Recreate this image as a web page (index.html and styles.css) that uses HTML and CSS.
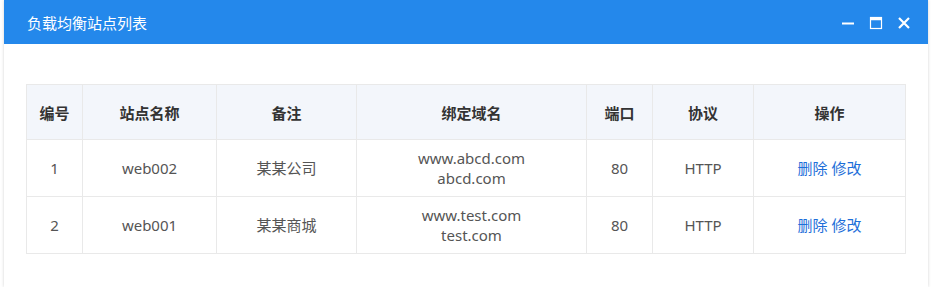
FILE: index.html
```html
<!DOCTYPE html>
<html lang="zh-CN">
<head>
    <meta charset="UTF-8">
    <meta name="viewport" content="width=device-width, initial-scale=1.0">
    <title>负载均衡站点列表</title>
    <link rel="stylesheet" href="styles.css">
</head>
<body>
    <div class="dialog">
        <div class="dialog-header">
            <span class="dialog-title">负载均衡站点列表</span>
            <div class="dialog-tools">
                <svg width="14" height="14" viewBox="0 0 14 14"><path d="M1 7.5h12" stroke="#fff" stroke-width="2"/></svg>
                <svg width="14" height="14" viewBox="0 0 14 14"><rect x="1.5" y="1.5" width="11" height="11" fill="none" stroke="#fff" stroke-width="1.2"/><path d="M1 3h12" stroke="#fff" stroke-width="2.5"/></svg>
                <svg width="14" height="14" viewBox="0 0 14 14"><path d="M2 2l10 10M12 2L2 12" stroke="#fff" stroke-width="2.2"/></svg>
            </div>
        </div>
        <div class="dialog-body">
            <table class="site-table">
                <thead>
                    <tr>
                        <th class="c-id">编号</th>
                        <th class="c-name">站点名称</th>
                        <th class="c-note">备注</th>
                        <th class="c-domain">绑定域名</th>
                        <th class="c-port">端口</th>
                        <th class="c-proto">协议</th>
                        <th>操作</th>
                    </tr>
                </thead>
                <tbody>
                    <tr>
                        <td>1</td>
                        <td>web002</td>
                        <td>某某公司</td>
                        <td>www.abcd.com<br>abcd.com</td>
                        <td>80</td>
                        <td>HTTP</td>
                        <td><a href="#">删除</a> <a href="#">修改</a></td>
                    </tr>
                    <tr>
                        <td>2</td>
                        <td>web001</td>
                        <td>某某商城</td>
                        <td>www.test.com<br>test.com</td>
                        <td>80</td>
                        <td>HTTP</td>
                        <td><a href="#">删除</a> <a href="#">修改</a></td>
                    </tr>
                </tbody>
            </table>
        </div>
    </div>
</body>
</html>
```

FILE: styles.css
```css
body {
    margin: 0;
    padding: 0 7px 0 4px;
    font-family: "Noto Sans", "Noto Sans CJK SC", sans-serif;
    background: #fff;
}
.dialog {
    background: #fff;
    height: 287px;
    box-shadow: 0 0 3px rgba(0,0,0,0.18);
}
.dialog-header {
    display: flex;
    align-items: center;
    justify-content: space-between;
    height: 44px;
    padding: 0 17px 0 23px;
    background-color: #2488eb;
    color: #fff;
}
.dialog-title {
    font-size: 15px;
    font-family: "Noto Sans CJK SC", sans-serif;
}
.dialog-tools {
    display: flex;
    gap: 14px;
    padding-top: 1px;
}
.dialog-body {
    padding: 40px 22px 0 22px;
}
.site-table {
    width: 100%;
    border-collapse: collapse;
    font-size: 15px;
    color: #555;
    text-align: center;
}
.site-table th,
.site-table td {
    border: 1px solid #e9e9e9;
    padding: 0;
}
.site-table th {
    height: 54px;
    background-color: #f3f6fb;
    color: #333;
    font-weight: bold;
    font-family: "Noto Sans CJK SC", sans-serif;
}
.site-table td {
    height: 56px;
    line-height: 20px;
}
.c-id { width: 55px; }
.c-name { width: 133px; }
.c-note { width: 139px; }
.c-domain { width: 229px; }
.c-port { width: 65px; }
.c-proto { width: 100px; }
.site-table a {
    color: #1e6fd9;
    text-decoration: none;
}
```
